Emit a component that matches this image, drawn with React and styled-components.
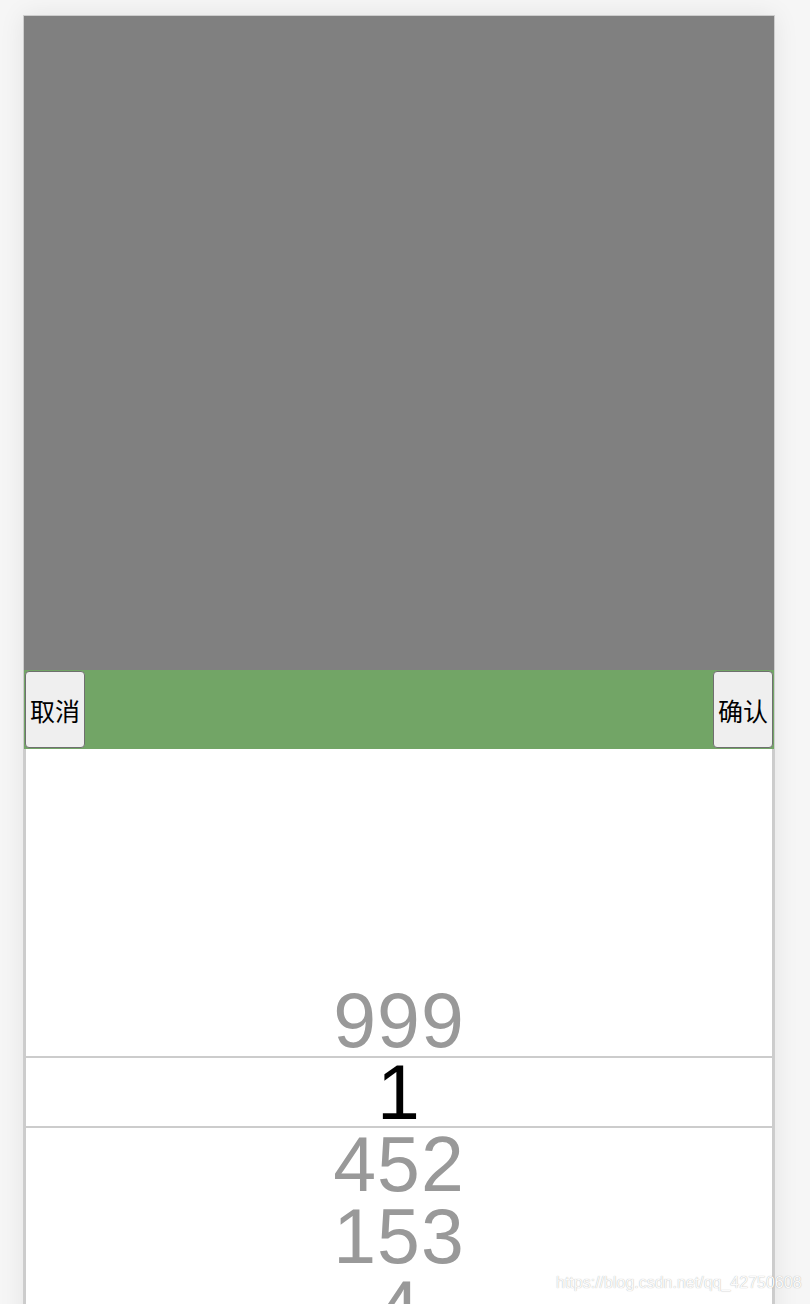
import styled, { createGlobalStyle } from "styled-components";

const GlobalStyle = createGlobalStyle`
  html, body {
    margin: 0;
    padding: 0;
    height: 1304px;
    overflow: hidden;
    background: #f6f6f6;
    font-family: "Liberation Sans", Arial, sans-serif;
  }
`;

const Page = styled.div`
  position: relative;
  height: 1304px;
  padding: 15px 0 0 23px;
  box-sizing: border-box;
`;

const Phone = styled.div`
  width: 752px;
  height: 1400px;
  border: 1px solid #cdcdcd;
  box-sizing: border-box;
  background: #fff;
  box-shadow: 0 0 24px rgba(0, 0, 0, 0.08);
  display: flex;
  flex-direction: column;
`;

const Screen = styled.div`
  height: 654px;
  background: #808080;
`;

const Toolbar = styled.div`
  height: 79px;
  background: #72a566;
  display: flex;
  justify-content: space-between;
  align-items: stretch;
  padding: 1px;
  box-sizing: border-box;
`;

const Button = styled.button`
  margin: 0;
  padding: 0 4px;
  border: 1px solid #6f6f6f;
  border-radius: 4px;
  background: #efefef;
  color: #000;
  font-family: "Noto Sans CJK SC", sans-serif;
  font-size: 25px;
`;

const Picker = styled.ul`
  flex: 1;
  margin: 0;
  padding: 235px 0 0;
  list-style: none;
  border-left: 2px solid #cccccc;
  border-right: 2px solid #cccccc;
`;

const Item = styled.li`
  height: 72px;
  box-sizing: border-box;
  text-align: center;
  font-family: "Liberation Sans", Arial, sans-serif;
  font-size: 77px;
  letter-spacing: 1px;
  line-height: ${(p) => (p.$active ? "68px" : "72px")};
  color: ${(p) => (p.$active ? "#000" : "#999")};
  border-top: ${(p) => (p.$active ? "2px solid #cccccc" : "none")};
  border-bottom: ${(p) => (p.$active ? "2px solid #cccccc" : "none")};
`;

const Watermark = styled.div`
  position: absolute;
  left: 556px;
  top: 1274px;
  font-family: "Liberation Sans", Arial, sans-serif;
  font-size: 16px;
  color: #fbfbfb;
  text-shadow: 0 0 1px rgba(0, 0, 0, 0.35);
  white-space: nowrap;
`;

const values = ["999", "1", "452", "153", "4"];

export default function App() {
  return (
    <>
      <GlobalStyle />
      <Page>
        <Phone>
          <Screen />
          <Toolbar>
            <Button>取消</Button>
            <Button>确认</Button>
          </Toolbar>
          <Picker>
            {values.map((v, i) => (
              <Item key={v} $active={i === 1}>
                {v}
              </Item>
            ))}
          </Picker>
        </Phone>
        <Watermark>https://blog.csdn.net/qq_42750608</Watermark>
      </Page>
    </>
  );
}
